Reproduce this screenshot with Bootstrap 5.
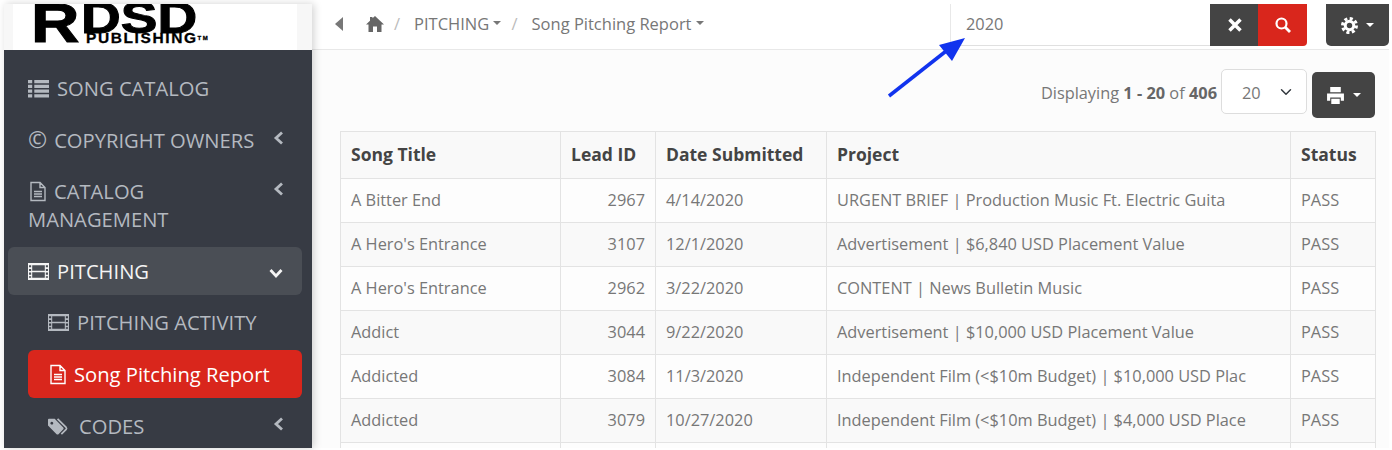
<!DOCTYPE html>
<html lang="en">
  <head>
    <meta charset="UTF-8" />
    <title>Song Pitching Report</title>
    <link
      href="https://cdn.jsdelivr.net/npm/bootstrap@5.3.0/dist/css/bootstrap.min.css"
      rel="stylesheet"
    />
    <style>
      html,
      body {
        height: 450px;
        overflow: hidden;
      }
      body {
        background: #fff;
        font-family: "Open Sans", sans-serif;
        font-size: 16.35px;
        color: #777;
      }
      .shell {
        height: 448px;
        padding: 4px 3px 0 4px;
        position: relative;
      }
      .side {
        width: 308px;
        flex: none;
        box-shadow: 2px 0 8px rgba(0, 0, 0, 0.18);
        z-index: 1;
      }
      .logo-box {
        height: 46px;
        background: #f7f7f7;
        padding-left: 9px;
      }
      .logo-white {
        width: 284px;
        height: 46px;
        background: #fff;
        overflow: hidden;
        padding-left: 18px;
        color: #000;
        font-family: "Liberation Sans", sans-serif;
        font-weight: 700;
      }
      .logo-r {
        width: 50px;
        flex: none;
        font-size: 55px;
        line-height: 38px;
        transform: scaleX(1.22);
        transform-origin: left top;
        -webkit-text-stroke: 1px #000;
      }
      .logo-d {
        font-size: 44px;
        line-height: 28px;
        transform: scaleX(1.25);
        transform-origin: left top;
        -webkit-text-stroke: 1px #000;
      }
      .logo-sub {
        font-size: 15.5px;
        line-height: 11px;
        margin-left: 5px;
        letter-spacing: 1.6px;
        white-space: nowrap;
        -webkit-text-stroke: 0.3px #000;
      }
      .logo-sub sup {
        font-size: 6px;
        top: -0.5em;
      }
      .side-menu {
        flex: 1;
        background: #373b44;
        padding: 14px 10px 0 4px;
        gap: 3.6px;
        font-size: 20.2px;
        overflow: hidden;
      }
      .side-link {
        color: #b4b9c0;
        padding: 10px 20px;
        line-height: 28px;
        border-radius: 6px;
        display: flex;
        justify-content: space-between;
        align-items: flex-start;
        text-decoration: none;
      }
      .side-link svg.ico {
        width: 21px;
        height: 21px;
        vertical-align: -3px;
        margin-right: 8px;
      }
      .side-link svg.ico-file {
        width: 20px;
        margin-right: 6px;
      }
      .side-link svg.ico-tag {
        margin-right: 10px;
      }
      .copy-mark {
        font-size: 23px;
        line-height: 20px;
        margin-right: 7px;
      }
      .side-link svg.chev {
        width: 14px;
        height: 14px;
        margin-top: 5px;
        margin-right: -4px;
        flex: none;
      }
      .side-link svg.chev-open {
        margin-top: 9px;
        margin-right: -1px;
      }
      .side-sub {
        margin-left: 20px;
      }
      .side-open {
        background: #4a4e55;
        color: #f4f4f4;
      }
      .side-active {
        background: #d9261c;
        color: #fff;
      }
      .main-pane {
        flex: 1;
        min-width: 0;
        background: #fcfcfc;
        overflow: hidden;
      }
      .top-strip {
        flex: none;
        height: 46px;
        background: #fff;
        border-bottom: 1px solid #e8e8e8;
      }
      .crumbs {
        padding: 0 0 5px 22px;
        font-size: 16.5px;
      }
      .crumbs .breadcrumb {
        --bs-breadcrumb-divider-color: #bbb;
        --bs-breadcrumb-item-padding-x: 10px;
        --bs-breadcrumb-margin-bottom: 0;
        align-items: center;
      }
      .crumbs .breadcrumb-item {
        color: #777;
      }
      .crumbs a {
        color: #777;
        text-decoration: none;
      }
      .crumbs .breadcrumb-item + .breadcrumb-item::before {
        padding-right: 14px;
      }
      .crumbs .breadcrumb-item + .breadcrumb-item {
        padding-left: 10px;
      }
      .back-caret {
        width: 10px;
        height: 16px;
        fill: #777;
        margin-right: 22px;
      }
      .home-ico {
        width: 18px;
        height: 18px;
        fill: #666;
        display: block;
      }
      .find-box {
        width: 357px;
        height: 42px;
      }
      .find-box .form-control {
        height: 42px;
        border: 0;
        border-left: 1px solid #e8e8e8;
        border-bottom: 1px solid #e0e0e0;
        border-radius: 0;
        color: #777;
        font-size: 16.35px;
        padding: 5px 12px 7px 15px;
        background: #fff;
      }
      .btn-ink,
      .btn-ink:hover {
        background: #444;
        color: #fff;
        border: 0;
      }
      .btn-hot,
      .btn-hot:hover {
        background: #d9261c;
        color: #fff;
        border: 0;
      }
      .find-box .btn-ink {
        width: 49px;
        border-radius: 0;
      }
      .find-box .btn-hot {
        width: 49px;
        border-radius: 0 0 4px 0;
      }
      .find-box svg {
        width: 16px;
        height: 16px;
      }
      .gear-btn {
        width: 63px;
        height: 42px;
        margin-left: 19px;
        border-radius: 0 0 5px 5px !important;
        font-size: 16px;
      }
      .gear-btn svg {
        width: 17px;
        height: 17px;
        vertical-align: -3px;
      }
      .print-btn svg {
        width: 19px;
        height: 19px;
        vertical-align: -4px;
      }
      .tool-row {
        flex: none;
        height: 81px;
        padding: 19px 14px 0 0;
      }
      .tool-row .form-select {
        width: 86px;
        height: 45px;
        margin: 0 5px 0 4px;
        color: #777;
        font-size: 16.35px;
        padding: 8px 24px 4px 20px;
        border-color: #ddd;
        border-radius: 5px;
      }
      .count-text {
        line-height: 48px;
      }
      .count-text b {
        color: #666;
      }
      .print-btn {
        width: 63px;
        height: 46px;
        margin-top: 3px;
        border-radius: 5px !important;
      }
      .song-wrap {
        padding: 0 14px 0 28px;
      }
      .song-table {
        table-layout: fixed;
        width: 1035px;
        margin: 0;
        border-color: #e3e3e3;
        color: #777;
        --bs-table-color: #777;
        --bs-table-bg: transparent;
        font-size: 16.35px;
      }
      .song-table th,
      .song-table td {
        padding: 10px;
        line-height: 23px;
        white-space: nowrap;
        overflow: hidden;
        height: 44px;
      }
      .song-table th {
        color: #444;
        font-weight: 700;
        font-size: 17.5px;
        height: 47px;
        padding-top: 9px;
        padding-bottom: 12px;
        background: #f9f9f9;
        border-bottom-width: 1px;
      }
      .song-table tbody tr:nth-child(even) td {
        background: #f9f9f9;
      }
      .song-table tbody tr:nth-child(odd) td {
        background: #fdfdfd;
      }
      .w-title {
        width: 220px;
      }
      .w-lead {
        width: 95px;
      }
      .w-date {
        width: 171px;
      }
      .w-project {
        width: 464px;
      }
      .w-status {
        width: 85px;
      }
      .note-arrow {
        position: absolute;
        left: 880px;
        top: 30px;
        width: 95px;
        height: 75px;
        z-index: 3;
      }
    </style>
  </head>
  <body>
    <svg width="0" height="0" class="position-absolute">
      <symbol id="i-list" viewBox="0 0 20 20">
        <path d="M0 2h4v3H0zM6 2h14v3H6zM0 6.500h4v3H0zM6 6.500h14v3H6zM0 11h4v3H0zM6 11h14v3H6zM0 15.500h4v3H0zM6 15.500h14v3H6z" fill="currentColor" />
      </symbol>
      <symbol id="i-file" viewBox="0 0 20 20">
        <path d="M3 1h9l5 5v13H3zM12 1v5h5M6 10h8M6 12.500h8M6 15h8" fill="none" stroke="currentColor" stroke-width="1.400" />
      </symbol>
      <symbol id="i-film" viewBox="0 0 20 20">
        <path d="M0 2h20v16H0zM4 4v12h12V4zM1 4h2v2H1zM1 7.500h2v2H1zM1 11h2v2H1zM1 14.500h2v1.500H1zM17 4h2v2h-2zM17 7.500h2v2h-2zM17 11h2v2h-2zM17 14.500h2v1.500h-2zM4 9.200h12v1.600H4z" fill="currentColor" fill-rule="evenodd" />
      </symbol>
      <symbol id="i-tag" viewBox="0 0 22 20">
        <path d="M0 3a1 1 0 0 1 1-1h6l9 9a1.500 1.500 0 0 1 0 2l-5 5a1.500 1.500 0 0 1-2 0L0 9zM4 5a1.500 1.500 0 1 0 .01 0z" fill="currentColor" fill-rule="evenodd" />
        <path d="M10 2l9 9a1.500 1.500 0 0 1 0 2l-5 5" fill="none" stroke="currentColor" stroke-width="1.800" />
      </symbol>
      <symbol id="i-left" viewBox="0 0 14 14">
        <path d="M10 1.500L4 7l6 5.500" fill="none" stroke="currentColor" stroke-width="2.800" />
      </symbol>
      <symbol id="i-down" viewBox="0 0 14 14">
        <path d="M1.500 4L7 10l5.500-6" fill="none" stroke="currentColor" stroke-width="2.800" />
      </symbol>
      <symbol id="i-gear" viewBox="0 0 20 20">
        <circle cx="10" cy="10" r="5" fill="none" stroke="currentColor" stroke-width="3.600" />
        <circle cx="10" cy="10" r="8.200" fill="none" stroke="currentColor" stroke-width="3.600" stroke-dasharray="3.600 2.840" />
      </symbol>
    </svg>

    <div class="shell d-flex">
      <aside class="side d-flex flex-column">
        <div class="logo-box">
          <div class="logo-white d-flex align-items-start">
            <div class="logo-r">R</div>
            <div>
              <div class="logo-d">DSD</div>
              <div class="logo-sub">PUBLISHING<sup>TM</sup></div>
            </div>
          </div>
        </div>
        <nav class="side-menu nav flex-column flex-nowrap">
          <a class="side-link" href="#">
            <span><svg class="ico"><use href="#i-list" /></svg>SONG CATALOG</span>
          </a>
          <a class="side-link" href="#">
            <span><span class="copy-mark">&copy;</span>COPYRIGHT OWNERS</span>
            <svg class="chev"><use href="#i-left" /></svg>
          </a>
          <a class="side-link" href="#">
            <span><svg class="ico ico-file"><use href="#i-file" /></svg>CATALOG MANAGEMENT</span>
            <svg class="chev"><use href="#i-left" /></svg>
          </a>
          <a class="side-link side-open" href="#">
            <span><svg class="ico"><use href="#i-film" /></svg>PITCHING</span>
            <svg class="chev chev-open"><use href="#i-down" /></svg>
          </a>
          <a class="side-link side-sub" href="#">
            <span><svg class="ico"><use href="#i-film" /></svg>PITCHING ACTIVITY</span>
          </a>
          <a class="side-link side-sub side-active" href="#">
            <span><svg class="ico ico-file"><use href="#i-file" /></svg>Song Pitching Report</span>
          </a>
          <a class="side-link side-sub" href="#">
            <span><svg class="ico ico-tag"><use href="#i-tag" /></svg>CODES</span>
            <svg class="chev"><use href="#i-left" /></svg>
          </a>
        </nav>
      </aside>

      <main class="main-pane d-flex flex-column">
        <div class="top-strip d-flex justify-content-between">
          <div class="crumbs d-flex align-items-center">
            <svg class="back-caret" viewBox="0 0 10 16"><path d="M9 1v14L1 8z" /></svg>
            <ol class="breadcrumb">
              <li class="breadcrumb-item">
                <a href="#">
                  <svg class="home-ico" viewBox="0 0 18 18"><path d="M9 1l9 8.500h-2.500V17h-4.500v-5.500H7V17H2.500V9.500H0L4 5.700V2h2.500v1.300z" /></svg>
                </a>
              </li>
              <li class="breadcrumb-item"><a class="dropdown-toggle" href="#">PITCHING</a></li>
              <li class="breadcrumb-item"><a class="dropdown-toggle" href="#">Song Pitching Report</a></li>
            </ol>
          </div>
          <div class="d-flex align-items-start">
            <div class="input-group find-box">
              <input class="form-control" type="text" value="2020" />
              <button class="btn btn-ink d-flex align-items-center justify-content-center" type="button">
                <svg viewBox="0 0 16 16"><path d="M2.500 2.500l11 11M13.500 2.500l-11 11" fill="none" stroke="currentColor" stroke-width="3.500" /></svg>
              </button>
              <button class="btn btn-hot d-flex align-items-center justify-content-center" type="button">
                <svg viewBox="0 0 16 16"><circle cx="6.500" cy="6.500" r="5" fill="none" stroke="currentColor" stroke-width="2.200" /><path d="M10 10l5 5" stroke="currentColor" stroke-width="2.800" /></svg>
              </button>
            </div>
            <button class="btn btn-ink gear-btn dropdown-toggle" type="button">
              <svg><use href="#i-gear" /></svg>
            </button>
          </div>
        </div>

        <div class="tool-row d-flex justify-content-end align-items-start">
          <span class="count-text">Displaying <b>1 - 20</b> of <b>406</b></span>
          <select class="form-select">
            <option>20</option>
          </select>
          <button class="btn btn-ink print-btn dropdown-toggle" type="button">
            <svg viewBox="0 0 18 18"><path d="M4 1h10v5H4zM1 7h16v7h-3v-3H4v3H1zM5 12h8v5H5z" fill="currentColor" /></svg>
          </button>
        </div>

        <div class="song-wrap">
          <table class="table table-bordered song-table">
            <colgroup>
              <col class="w-title" />
              <col class="w-lead" />
              <col class="w-date" />
              <col class="w-project" />
              <col class="w-status" />
            </colgroup>
            <thead>
              <tr>
                <th>Song Title</th>
                <th>Lead ID</th>
                <th>Date Submitted</th>
                <th>Project</th>
                <th>Status</th>
              </tr>
            </thead>
            <tbody>
              <tr><td>A Bitter End</td><td class="text-end">2967</td><td>4/14/2020</td><td>URGENT BRIEF | Production Music Ft. Electric Guita</td><td>PASS</td></tr>
              <tr><td>A Hero's Entrance</td><td class="text-end">3107</td><td>12/1/2020</td><td>Advertisement | $6,840 USD Placement Value</td><td>PASS</td></tr>
              <tr><td>A Hero's Entrance</td><td class="text-end">2962</td><td>3/22/2020</td><td>CONTENT | News Bulletin Music</td><td>PASS</td></tr>
              <tr><td>Addict</td><td class="text-end">3044</td><td>9/22/2020</td><td>Advertisement | $10,000 USD Placement Value</td><td>PASS</td></tr>
              <tr><td>Addicted</td><td class="text-end">3084</td><td>11/3/2020</td><td>Independent Film (&lt;$10m Budget) | $10,000 USD Plac</td><td>PASS</td></tr>
              <tr><td>Addicted</td><td class="text-end">3079</td><td>10/27/2020</td><td>Independent Film (&lt;$10m Budget) | $4,000 USD Place</td><td>PASS</td></tr>
              <tr><td>&nbsp;</td><td></td><td></td><td></td><td></td></tr>
            </tbody>
          </table>
        </div>
      </main>

      <svg class="note-arrow" viewBox="0 0 95 75">
        <path d="M9 66L70 18" stroke="#1133ee" stroke-width="3.500" fill="none" />
        <path d="M85 8L59 15L72 31z" fill="#1133ee" />
      </svg>
    </div>
    <script src="https://cdn.jsdelivr.net/npm/bootstrap@5.3.0/dist/js/bootstrap.bundle.min.js"></script>
  </body>
</html>
